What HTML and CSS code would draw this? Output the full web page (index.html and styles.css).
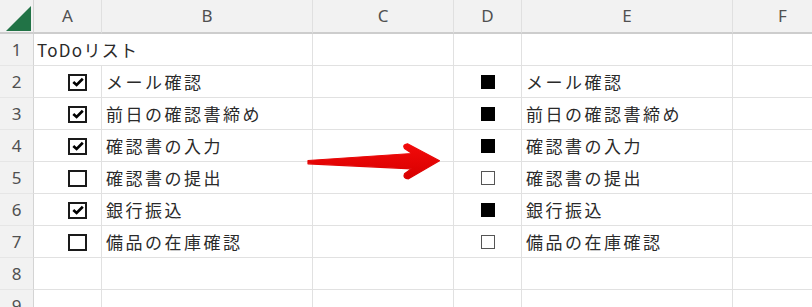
FILE: index.html
```html
<!DOCTYPE html>
<html lang="ja">
<head>
<meta charset="utf-8">
<link rel="stylesheet" href="styles.css">
</head>
<body>
<div class="sheet">
  <div class="grid">
    <div class="corner"><svg class="corner-tri" width="34" height="34" viewBox="0 0 34 34"><polygon points="6,31 31,31 31,6" fill="#217346"/></svg></div>
    <div class="colh">A</div>
    <div class="colh">B</div>
    <div class="colh">C</div>
    <div class="colh">D</div>
    <div class="colh">E</div>
    <div class="colh last">F</div>

    <div class="rowh">1</div>
    <div class="cell title span2">ToDoリスト</div>
    <div class="cell"></div>
    <div class="cell"></div>
    <div class="cell"></div>
    <div class="cell last"></div>

    <div class="rowh">2</div>
    <div class="cell chk"><span class="box on"><svg viewBox="0 0 12 10" width="12" height="10"><path d="M1.3 5 L4.6 8 L10.8 1.8" fill="none" stroke="#000" stroke-width="2.7"/></svg></span></div>
    <div class="cell text">メール確認</div>
    <div class="cell"></div>
    <div class="cell sq"><span class="square fill"></span></div>
    <div class="cell text">メール確認</div>
    <div class="cell last"></div>

    <div class="rowh">3</div>
    <div class="cell chk"><span class="box on"><svg viewBox="0 0 12 10" width="12" height="10"><path d="M1.3 5 L4.6 8 L10.8 1.8" fill="none" stroke="#000" stroke-width="2.7"/></svg></span></div>
    <div class="cell text">前日の確認書締め</div>
    <div class="cell"></div>
    <div class="cell sq"><span class="square fill"></span></div>
    <div class="cell text">前日の確認書締め</div>
    <div class="cell last"></div>

    <div class="rowh">4</div>
    <div class="cell chk"><span class="box on"><svg viewBox="0 0 12 10" width="12" height="10"><path d="M1.3 5 L4.6 8 L10.8 1.8" fill="none" stroke="#000" stroke-width="2.7"/></svg></span></div>
    <div class="cell text">確認書の入力</div>
    <div class="cell"></div>
    <div class="cell sq"><span class="square fill"></span></div>
    <div class="cell text">確認書の入力</div>
    <div class="cell last"></div>

    <div class="rowh">5</div>
    <div class="cell chk"><span class="box"></span></div>
    <div class="cell text">確認書の提出</div>
    <div class="cell"></div>
    <div class="cell sq"><span class="square"></span></div>
    <div class="cell text">確認書の提出</div>
    <div class="cell last"></div>

    <div class="rowh">6</div>
    <div class="cell chk"><span class="box on"><svg viewBox="0 0 12 10" width="12" height="10"><path d="M1.3 5 L4.6 8 L10.8 1.8" fill="none" stroke="#000" stroke-width="2.7"/></svg></span></div>
    <div class="cell text">銀行振込</div>
    <div class="cell"></div>
    <div class="cell sq"><span class="square fill"></span></div>
    <div class="cell text">銀行振込</div>
    <div class="cell last"></div>

    <div class="rowh">7</div>
    <div class="cell chk"><span class="box"></span></div>
    <div class="cell text">備品の在庫確認</div>
    <div class="cell"></div>
    <div class="cell sq"><span class="square"></span></div>
    <div class="cell text">備品の在庫確認</div>
    <div class="cell last"></div>

    <div class="rowh">8</div>
    <div class="cell"></div>
    <div class="cell"></div>
    <div class="cell"></div>
    <div class="cell"></div>
    <div class="cell"></div>
    <div class="cell last"></div>

    <div class="rowh">9</div>
    <div class="cell"></div>
    <div class="cell"></div>
    <div class="cell"></div>
    <div class="cell"></div>
    <div class="cell"></div>
    <div class="cell last"></div>
  </div>
  <svg class="arrow" width="812" height="307" viewBox="0 0 812 307">
    <defs>
      <linearGradient id="ag" x1="0" y1="0" x2="0" y2="1">
        <stop offset="0" stop-color="#f20a0a"/>
        <stop offset="1" stop-color="#d80000"/>
      </linearGradient>
    </defs>
    <path d="M308,160.5 L412,153.5 L404.5,148.5 Q402,144.5 407.5,143.8 L439.5,160.8 L408.5,178.8 Q402.5,178.5 404.5,173.8 L411.5,168.8 L308,163.8 Z" fill="url(#ag)" stroke="url(#ag)" stroke-width="1.2" stroke-linejoin="round"/>
  </svg>
</div>
</body>
</html>
```

FILE: styles.css
```css
html, body {
  margin: 0;
  padding: 0;
  background: #ffffff;
}

.sheet {
  position: relative;
  width: 812px;
  height: 307px;
  overflow: hidden;
}

.grid {
  display: grid;
  grid-template-columns: 34px 68px 211px 141px 68px 211px 100px;
  grid-template-rows: 34px repeat(9, 32px);
  font-family: "Noto Sans CJK JP", "Noto Sans", sans-serif;
}

.corner {
  background: #f2f2f2;
  border-right: 1px solid #d4d4d4;
  border-bottom: 2px solid #cdcdcd;
  box-sizing: border-box;
  position: relative;
}

.corner-tri {
  display: block;
}

.colh {
  background: #f2f2f2;
  border-right: 1px solid #e0e0e0;
  border-bottom: 2px solid #cdcdcd;
  box-sizing: border-box;
  display: flex;
  align-items: center;
  justify-content: center;
  font-family: "Noto Sans", sans-serif;
  font-size: 17px;
  color: #505050;
  padding-bottom: 1px;
}

.rowh {
  background: #f2f2f2;
  border-right: 1px solid #d4d4d4;
  border-bottom: 1px solid #e6e6e6;
  box-sizing: border-box;
  display: flex;
  align-items: center;
  justify-content: center;
  font-family: "Noto Sans", sans-serif;
  font-size: 17px;
  color: #505050;
}

.cell {
  border-right: 1px solid #e1e1e1;
  border-bottom: 1px solid #e1e1e1;
  box-sizing: border-box;
  display: flex;
  align-items: center;
  font-size: 17px;
  color: #2a2a2a;
  white-space: nowrap;
}

.cell.last {
  border-right: none;
}

.span2 {
  grid-column: span 2;
}

.title {
  padding-left: 3px;
  letter-spacing: 1.3px;
}

.text {
  padding-left: 4px;
  letter-spacing: 2.5px;
}

.chk {
  justify-content: flex-end;
  padding-right: 14px;
}

.box {
  width: 19px;
  height: 17px;
  box-sizing: border-box;
  border: 2px solid #1a1a1a;
  display: flex;
  align-items: center;
  justify-content: center;
  margin-top: 1px;
}

.box svg {
  display: block;
}

.sq {
  justify-content: center;
}

.square {
  width: 14px;
  height: 14px;
  box-sizing: border-box;
  border: 1px solid #555555;
  background: #ffffff;
  margin-left: 1px;
}

.square.fill {
  background: #000000;
  border-color: #000000;
}

.arrow {
  position: absolute;
  left: 0;
  top: 0;
  pointer-events: none;
}
```
